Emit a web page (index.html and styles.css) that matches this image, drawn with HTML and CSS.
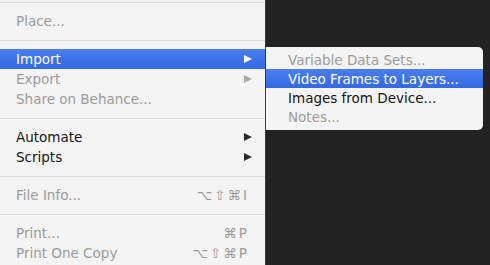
FILE: index.html
```html
<!DOCTYPE html>
<html>
<head>
<meta charset="utf-8">
<link rel="stylesheet" href="styles.css">
</head>
<body>
<div class="screen">
  <div class="menu">
    <div class="sep sep-top"></div>
    <div class="item dis"><span class="label">Place...</span></div>
    <div class="sep"></div>
    <div class="item sel"><span class="label">Import</span><span class="arrow"></span></div>
    <div class="item dis"><span class="label">Export</span><span class="arrow"></span></div>
    <div class="item dis"><span class="label">Share on Behance...</span></div>
    <div class="sep"></div>
    <div class="item"><span class="label">Automate</span><span class="arrow"></span></div>
    <div class="item"><span class="label">Scripts</span><span class="arrow"></span></div>
    <div class="sep"></div>
    <div class="item dis"><span class="label">File Info...</span><span class="key">⌥⇧⌘I</span></div>
    <div class="sep"></div>
    <div class="item dis"><span class="label">Print...</span><span class="key">⌘P</span></div>
    <div class="item dis"><span class="label">Print One Copy</span><span class="key">⌥⇧⌘P</span></div>
  </div>
  <div class="side">
    <div class="submenu">
      <div class="item dis"><span class="label">Variable Data Sets...</span></div>
      <div class="item sel"><span class="label">Video Frames to Layers...</span></div>
      <div class="item"><span class="label">Images from Device...</span></div>
      <div class="item dis"><span class="label">Notes...</span></div>
    </div>
  </div>
</div>
</body>
</html>
```
FILE: styles.css
```css
html, body {
  margin: 0;
  padding: 0;
  background: #232323;
}
.screen {
  display: flex;
  width: 490px;
  height: 265px;
  overflow: hidden;
  font-family: "DejaVu Sans", "Noto Sans", sans-serif;
  font-size: 13.5px;
  color: #141414;
}
.menu {
  width: 265px;
  flex: none;
  background: #f4f4f4;
  border-right: 1px solid #3a3a3a;
  padding-top: 2px;
}
.sep {
  height: 1px;
  background: #dcdcdc;
  margin: 9px 0 8px;
}
.sep-top {
  margin-top: 0;
}
.item {
  height: 20px;
  display: flex;
  align-items: center;
  padding: 0 13px 0 16px;
  white-space: nowrap;
}
.item .label {
  flex: 1;
}
.dis {
  color: #9b9b9b;
}
.sel {
  background: linear-gradient(#4a7ef0, #3568e4);
  color: #ffffff;
}
.arrow {
  width: 0;
  height: 0;
  border-top: 4.5px solid transparent;
  border-bottom: 4.5px solid transparent;
  border-left: 8px solid #2a2a2a;
}
.dis .arrow {
  border-left-color: #a8a8a8;
}
.sel .arrow {
  border-left-color: #ffffff;
}
.key {
  margin-right: 3px;
  letter-spacing: 2px;
}
.side {
  flex: 1;
}
.submenu {
  width: 217px;
  margin-top: 47px;
  background: #f4f4f4;
  border-radius: 0 5px 5px 0;
  padding: 3px 0 4px;
}
.submenu .item {
  height: 19px;
  padding-left: 22px;
}
```
